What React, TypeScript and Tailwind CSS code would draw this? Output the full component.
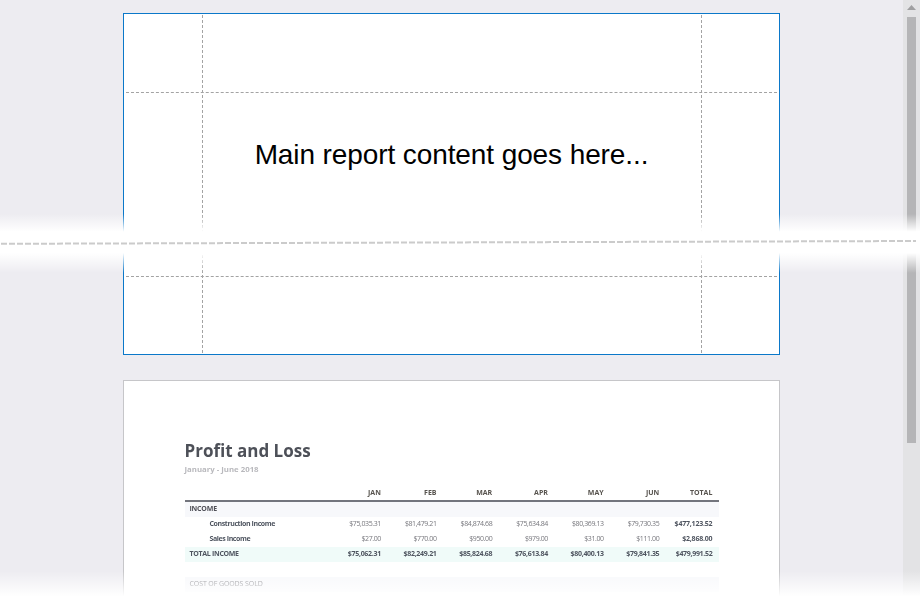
const MONTHS = ["JAN", "FEB", "MAR", "APR", "MAY", "JUN", "TOTAL"];

const ROWS = [
  { label: "Construction Income", values: ["$75,035.31", "$81,479.21", "$84,874.68", "$75,634.84", "$80,369.13", "$79,730.35", "$477,123.52"] },
  { label: "Sales Income", values: ["$27.00", "$770.00", "$950.00", "$979.00", "$31.00", "$111.00", "$2,868.00"] },
];

const TOTALS = ["$75,062.31", "$82,249.21", "$85,824.68", "$76,613.84", "$80,400.13", "$79,841.35", "$479,991.52"];
const COGS = ["$573.75", "$2,225.80", "$2,331.50", "$1,884.25", "$2,105.00", "$1,962.40", "$11,082.70"];

const COLS = "grid grid-cols-[140.7px_repeat(6,55.7px)_58.1px] items-center";

const ReportTable = () => (
  <div className="mt-[10px] font-['Open_Sans',sans-serif] text-[7px] blur-[0.35px]">
    <div className={`${COLS} h-[15px] pt-[1px] font-bold text-[#57534e]`}>
      <div />
      {MONTHS.map((m, i) => (
        <div key={m} className={`text-right ${i === 6 ? "pr-[5px]" : ""}`}>{m}</div>
      ))}
    </div>
    <div className="h-[2px] bg-[#73757d]" />
    <div className="flex h-[15px] items-center bg-[#f7f8fb] pl-[5px] font-bold tracking-[-0.2px] text-[#4f4f57]">INCOME</div>
    {ROWS.map(r => (
      <div key={r.label} className={`${COLS} h-[15px] tracking-[-0.4px] text-[#77777d]`}>
        <div className="pl-[25px] font-bold text-[#4f5560]">{r.label}</div>
        {r.values.map((v, i) => (
          <div key={v} className={`text-right ${i === 6 ? "pr-[5px] font-bold tracking-[-0.2px] text-[#4f5560]" : ""}`}>{v}</div>
        ))}
      </div>
    ))}
    <div className={`${COLS} h-[15px] bg-[#f0fbf9] font-bold tracking-[-0.3px] text-[#4f5560]`}>
      <div className="pl-[5px]">TOTAL INCOME</div>
      {TOTALS.map((v, i) => (
        <div key={v} className={`text-right ${i === 6 ? "pr-[5px]" : ""}`}>{v}</div>
      ))}
    </div>
    <div className="h-[15px]" />
    <div className="flex h-[15px] items-center bg-[#f7f8fb] pl-[5px] tracking-[-0.1px] text-[#77777d]">COST OF GOODS SOLD</div>
    <div className={`${COLS} h-[15px] tracking-[-0.4px] text-[#77777d]`}>
      <div className="pl-[25px] font-bold">Cost of Goods Sold</div>
      {COGS.map((v, i) => (
        <div key={v} className={`text-right ${i === 6 ? "pr-[5px]" : ""}`}>{v}</div>
      ))}
    </div>
  </div>
);

const DesignPage = () => (
  <section className="relative flex h-[342px] w-[657px] shrink-0 items-center justify-center border border-[#0b78c9] bg-white">
    {/* margin guides */}
    <div className="absolute inset-y-[1px] left-[78px] border-l border-dashed border-[#a3a3a3]" />
    <div className="absolute inset-y-[1px] right-[77px] border-l border-dashed border-[#a3a3a3]" />
    <div className="absolute inset-x-[2px] top-[78px] border-t border-dashed border-[#a3a3a3]" />
    <div className="absolute inset-x-[2px] bottom-[77px] border-t border-dashed border-[#a3a3a3]" />
    <span className="pb-[58px] font-['Liberation_Sans',sans-serif] text-[28px] tracking-[-0.1px] text-black">Main report content goes here...</span>
  </section>
);

const PreviewPage = () => (
  <section className="mt-[25px] h-[400px] w-[657px] shrink-0 border border-[#c6c6c9] bg-white px-[60.5px] pt-[57px]">
    <h1 className="font-['Open_Sans',sans-serif] text-[17px] font-bold leading-[25px] text-[#4d5058] blur-[0.2px]">Profit and Loss</h1>
    <p className="font-['Open_Sans',sans-serif] text-[7.8px] font-bold leading-[12px] text-[#b9b9bd] blur-[0.2px]">January - June 2018</p>
    <ReportTable />
  </section>
);

const Scrollbar = () => (
  <aside className="flex w-[17px] shrink-0 flex-col items-center bg-[#e3e3e5]">
    <svg width="17" height="17" viewBox="0 0 17 17" className="shrink-0">
      <path d="M4 10 L8.5 5 L13 10 Z" fill="#9f9fa1" />
    </svg>
    <div className="h-[426px] w-[9px] bg-[#b5b5b7]" />
  </aside>
);

export default function App() {
  return (
    <div className="relative flex h-[601px] w-[920px] overflow-hidden bg-[#edecf1]">
      <main className="flex flex-1 flex-col items-center pt-[13px]">
        <DesignPage />
        <PreviewPage />
      </main>
      <Scrollbar />

      {/* page break overlay */}
      <div className="absolute inset-x-0 top-[214px] h-[59px] bg-[linear-gradient(to_bottom,transparent,white_30%,white_66%,transparent)]" />
      <svg className="absolute left-0 top-[238px]" width="920" height="8" viewBox="0 0 920 8">
        <line x1="1" y1="5.8" x2="916" y2="3" stroke="#cbcbcb" strokeWidth="2" strokeDasharray="6 2" />
      </svg>

      {/* bottom fade */}
      <div className="absolute inset-x-0 bottom-0 h-[30px] bg-[linear-gradient(to_bottom,transparent,white_85%)]" />
    </div>
  );
}
